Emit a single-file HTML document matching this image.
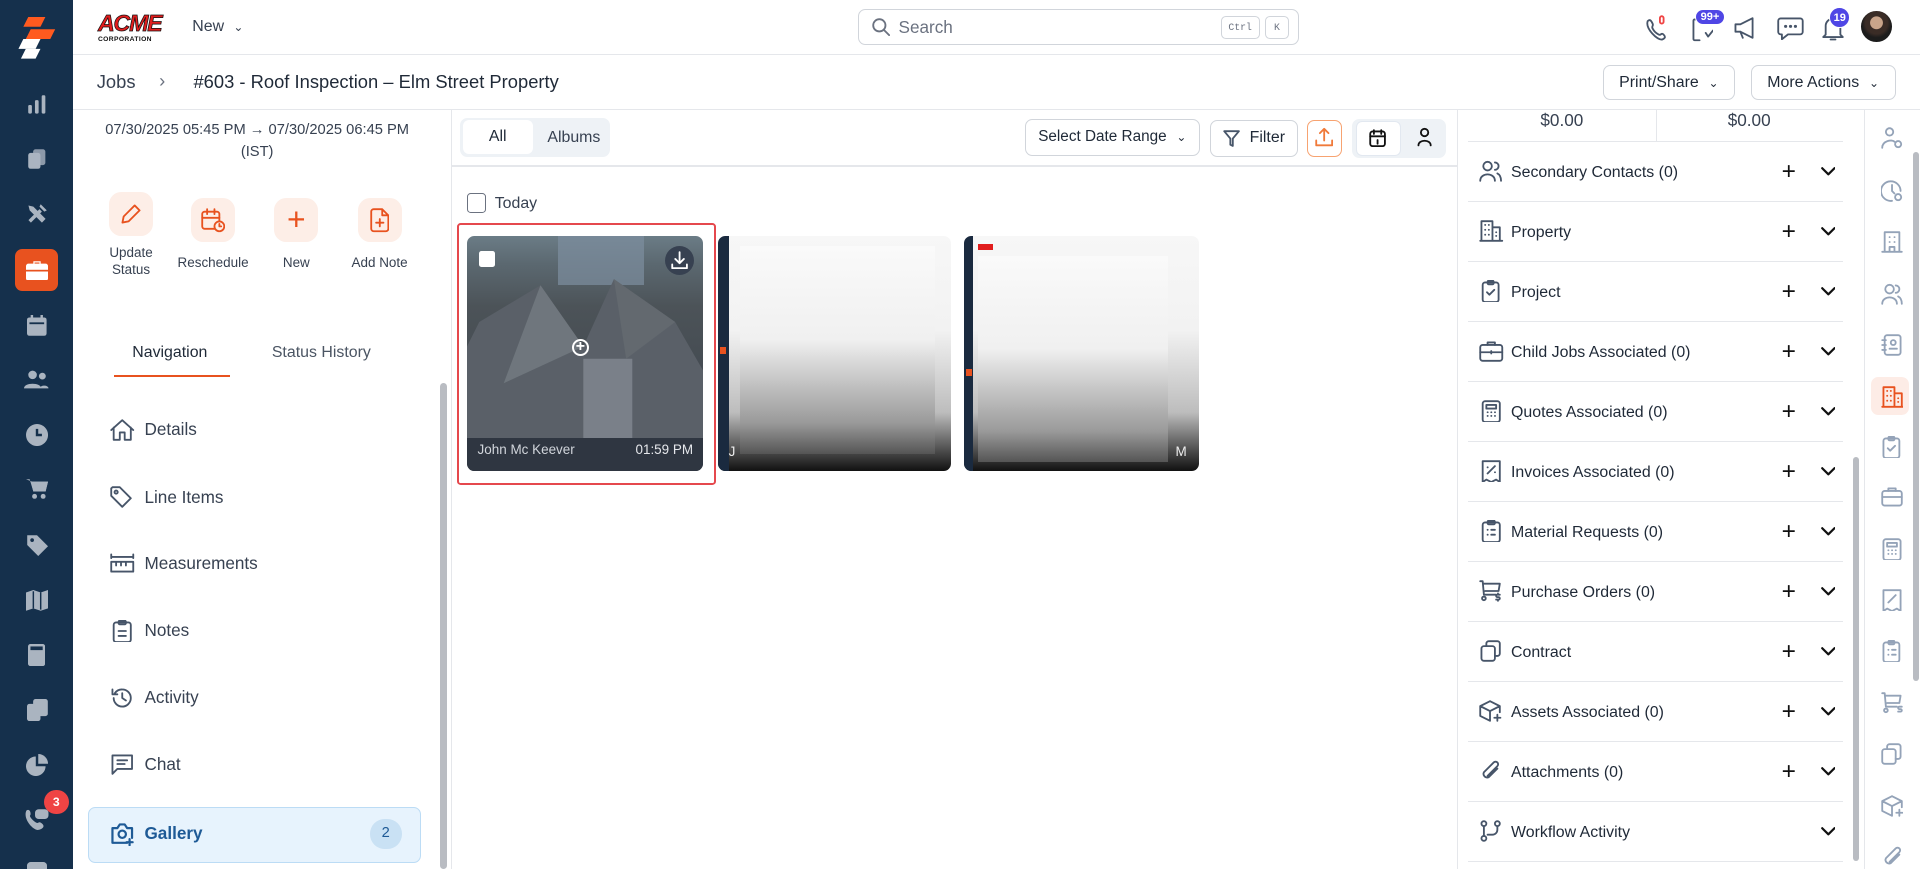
<!DOCTYPE html>
<html><head><meta charset="utf-8">
<style>
*{box-sizing:border-box;margin:0;padding:0}
html,body{width:1920px;height:869px;overflow:hidden;background:#fff}
#z{zoom:1.22449;width:1568px;height:710px;position:relative;font-family:"Liberation Sans",sans-serif;color:#1f2937;overflow:hidden}
.a{position:absolute}
svg{display:block}
.ic{stroke:#475569;fill:none;stroke-width:1.5;stroke-linecap:round;stroke-linejoin:round}
.sb svg{fill:#aab4c0}
.btn{border:1px solid #d1d5db;border-radius:6px;background:#fff;font-size:13px;color:#1f2937;display:flex;align-items:center;justify-content:center;gap:8px}
.nav{position:absolute;left:90px;display:flex;align-items:center;gap:8px;font-size:14px;color:#374151}
.row{position:absolute;left:1199px;width:306px;height:49px;border-bottom:1px solid #e5e7eb;font-size:13px;color:#1f2937}
.row .t{position:absolute;left:35px;top:18px}
.row .ri{position:absolute;left:9px;top:15px}
.row .pl{position:absolute;left:256px;top:13px;font-size:20px;font-weight:300;color:#111}
.row .ch{position:absolute;left:288px;top:20px}
.rr{position:absolute;left:1536px}
</style></head><body><div id="z">

<!-- sidebar -->
<div class="a sb" style="left:0;top:0;width:60px;height:710px;background:#15304c">
 <svg class="a" style="left:13px;top:14px" width="34" height="36" viewBox="0 0 34 36"><path d="M10 0h14l-4 8H6z" fill="#ff5a1f"/><path d="M12 10h20l-4 8H8z" fill="#ff5a1f"/><path d="M6 18h14l-4 8H2z" fill="#fff"/><path d="M8 26h12l-4 8H4z" fill="#fff"/></svg>
 <svg class="a" style="left:22px;top:77px" width="16" height="16" viewBox="0 0 16 16"><rect x="1" y="9" width="3" height="7" rx="1"/><rect x="6.5" y="5" width="3" height="11" rx="1"/><rect x="12" y="1" width="3" height="15" rx="1"/></svg>
 <svg class="a" style="left:22px;top:121px" width="16" height="18" viewBox="0 0 16 18"><rect x="1" y="4" width="10" height="13" rx="2"/><rect x="5" y="1" width="10" height="13" rx="2" opacity=".8"/></svg>
 <svg class="a" style="left:21px;top:166px" width="18" height="18" viewBox="0 0 18 18"><path d="M2 14l9-9 2 2-9 9zM12 1l5 5-2 1-4-4zM2 2l4 1 10 10-3 3L3 6z"/></svg>
 <div class="a" style="left:12px;top:203px;width:35px;height:35px;background:#e8521f;border-radius:6px"></div>
 <svg class="a" style="left:21px;top:212px" width="18" height="17" viewBox="0 0 18 17"><path d="M6 3V1h6v2h4a2 2 0 012 2v10a2 2 0 01-2 2H2a2 2 0 01-2-2V5a2 2 0 012-2zM7 3h4V2H7z" fill="#fff"/><rect x="0" y="8" width="18" height="1.4" fill="#e8521f"/></svg>
 <svg class="a" style="left:22px;top:257px" width="16" height="17" viewBox="0 0 16 17"><rect x="0" y="2" width="16" height="15" rx="2"/><rect x="3" y="0" width="2" height="4"/><rect x="11" y="0" width="2" height="4"/><rect x="2" y="6" width="12" height="1.5" fill="#15304c"/></svg>
 <svg class="a" style="left:20px;top:302px" width="20" height="16" viewBox="0 0 20 16"><circle cx="7" cy="4" r="3.5"/><circle cx="15" cy="5" r="2.8"/><path d="M0 15c0-5 14-5 14 0zM13 15c0-3 7-3 7 0z"/></svg>
 <svg class="a" style="left:21px;top:346px" width="18" height="18" viewBox="0 0 18 18"><circle cx="9" cy="9" r="9"/><path d="M9 4v5h4" stroke="#15304c" stroke-width="2" fill="none"/></svg>
 <svg class="a" style="left:21px;top:390px" width="18" height="18" viewBox="0 0 18 18"><path d="M0 1h3l3 10h10l2-8H5"/><circle cx="7" cy="15" r="2"/><circle cx="14" cy="15" r="2"/><path d="M4 3h14l-2 8H6z"/></svg>
 <svg class="a" style="left:21px;top:436px" width="18" height="18" viewBox="0 0 18 18"><path d="M1 1h8l9 9-8 8-9-9z"/><circle cx="5" cy="5" r="1.5" fill="#15304c"/></svg>
 <svg class="a" style="left:21px;top:482px" width="18" height="17" viewBox="0 0 18 17"><path d="M0 2l6-2 6 2 6-2v15l-6 2-6-2-6 2z"/><path d="M6 1v14M12 2v14" stroke="#15304c" stroke-width="1.2"/></svg>
 <svg class="a" style="left:23px;top:526px" width="14" height="18" viewBox="0 0 14 18"><rect width="14" height="18" rx="2"/><rect x="2" y="2" width="10" height="3" fill="#15304c"/></svg>
 <svg class="a" style="left:22px;top:571px" width="17" height="18" viewBox="0 0 17 18"><rect x="0" y="4" width="11" height="14" rx="2"/><rect x="5" y="0" width="12" height="14" rx="2"/></svg>
 <svg class="a" style="left:21px;top:616px" width="18" height="18" viewBox="0 0 18 18"><path d="M8 2a8 8 0 108 8H8z"/><path d="M10 0a8 8 0 018 8h-8z"/></svg>
 <svg class="a" style="left:20px;top:660px" width="20" height="19" viewBox="0 0 20 19"><path d="M2 2c3-2 4 3 3 4s3 5 5 6 2-2 5 1-2 5-4 5C6 17-1 8 2 2z"/><rect x="9" y="1" width="11" height="8" rx="3"/></svg>
 <div class="a" style="left:36px;top:645px;width:20px;height:20px;border-radius:50%;background:#ef4444;color:#fff;font-size:10px;font-weight:bold;text-align:center;line-height:20px">3</div>
 <div class="a" style="left:22px;top:704px;width:16px;height:6px;background:#aab4c0;border-radius:3px 3px 0 0"></div>
</div>

<!-- header -->
<div class="a" style="left:60px;top:44px;width:1508px;height:1px;background:#e5e7eb"></div>
<div class="a" style="left:80px;top:8px;font-family:'Liberation Sans';font-weight:900;font-size:19px;color:#e11d1d;letter-spacing:-1px;font-style:italic;-webkit-text-stroke:0.6px #111">ACME</div>
<div class="a" style="left:80px;top:29px;font-size:5.5px;font-weight:bold;letter-spacing:.3px;color:#111">CORPORATION</div>
<div class="a" style="left:157px;top:15px;font-size:13px;color:#374151">New <span style="font-size:10px;margin-left:4px">&#8964;</span></div>
<div class="a" style="left:701px;top:7px;width:360px;height:30px;border:1px solid #d1d5db;border-radius:6px">
 <svg class="a ic" style="left:10px;top:7px;stroke:#6b7280" width="15" height="15" viewBox="0 0 15 15"><circle cx="6" cy="6" r="5"/><path d="M10 10l4 4"/></svg>
 <div class="a" style="left:32px;top:6px;font-size:14px;color:#6b7280">Search</div>
 <div class="a" style="left:295px;top:5px;width:32px;height:19px;border:1px solid #d1d5db;border-radius:4px;font-family:'Liberation Mono';font-size:8px;color:#6b7280;text-align:center;line-height:18px">Ctrl</div>
 <div class="a" style="left:331px;top:5px;width:20px;height:19px;border:1px solid #d1d5db;border-radius:4px;font-family:'Liberation Mono';font-size:8px;color:#6b7280;text-align:center;line-height:18px">K</div>
</div>
<svg class="a ic" style="left:1343px;top:12px;stroke:#475569" width="20" height="22" viewBox="0 0 20 22"><path d="M3 5c2-2 3 0 4 2s-1 2 0 4 3 4 5 5 2-2 4 0 1 3-1 4C11 21 1 11 3 5z"/><rect x="13" y="1" width="3" height="6" rx="1.5" stroke="#ef4444"/></svg>
<svg class="a ic" style="left:1381px;top:14px" width="18" height="22" viewBox="0 0 18 22"><path d="M7 2H3a1 1 0 00-1 1v15a1 1 0 001 1h4M12 13l2 3 4-5"/></svg>
<div class="a" style="left:1384px;top:7px;background:#4f46e5;color:#fff;font-size:9px;font-weight:bold;border-radius:8px;padding:1px 4px;border:1px solid #fff">99+</div>
<svg class="a ic" style="left:1415px;top:14px" width="22" height="18" viewBox="0 0 22 18"><path d="M2 6h4l10-5v16L6 12H2zM6 12l2 5"/></svg>
<svg class="a ic" style="left:1451px;top:13px" width="22" height="20" viewBox="0 0 22 20"><path d="M3 2h16a2 2 0 012 2v9a2 2 0 01-2 2H9l-5 4v-4H3a2 2 0 01-2-2V4a2 2 0 012-2z"/><path d="M7 8.5h.1M11 8.5h.1M15 8.5h.1" stroke-width="2.5"/></svg>
<svg class="a ic" style="left:1488px;top:12px" width="18" height="22" viewBox="0 0 18 22"><path d="M3 16V9a6 6 0 0112 0v7l2 2H1zM7 20h4"/></svg>
<div class="a" style="left:1494px;top:6px;width:17px;height:17px;border-radius:50%;background:#4f46e5;color:#fff;font-size:9px;font-weight:bold;text-align:center;line-height:17px;border:1px solid #fff">19</div>
<div class="a" style="left:1520px;top:9px;width:25px;height:25px;border-radius:50%;background:radial-gradient(circle at 50% 38%,#c9a48a 0 25%,#3a2c26 27% 45%,#1c1c1c 60%)"></div>

<!-- breadcrumb bar -->
<div class="a" style="left:79px;top:58px;font-size:15px;color:#374151">Jobs</div>
<div class="a" style="left:130px;top:57px;font-size:15px;color:#6b7280">&#8250;</div>
<div class="a" style="left:158px;top:58px;font-size:15px;color:#1f2937">#603 - Roof Inspection – Elm Street Property</div>
<div class="a btn" style="left:1309px;top:53px;width:108px;height:29px">Print/Share <span style="font-size:10px">&#8964;</span></div>
<div class="a btn" style="left:1430px;top:53px;width:118px;height:29px">More Actions <span style="font-size:10px">&#8964;</span></div>
<div class="a" style="left:60px;top:89px;width:1508px;height:1px;background:#e5e7eb"></div>

<!-- left panel -->
<div class="a" style="left:80px;top:97px;width:260px;text-align:center;font-size:12px;line-height:18px;color:#374151">07/30/2025 05:45 PM → 07/30/2025 06:45 PM (IST)</div>
<div class="a" style="left:89px;top:157px;width:36px;height:36px;border-radius:10px;background:#fdeee7"></div>
<svg class="a ic" style="left:98px;top:166px;stroke:#e8521f" width="18" height="18" viewBox="0 0 18 18"><path d="M12 2l4 4-9 9-5 1 1-5z"/></svg>
<div class="a" style="left:72px;top:199px;width:70px;text-align:center;font-size:11px;line-height:14px;color:#374151">Update<br>Status</div>
<div class="a" style="left:156px;top:162px;width:36px;height:36px;border-radius:10px;background:#fdeee7"></div>
<svg class="a ic" style="left:164px;top:170px;stroke:#e8521f" width="20" height="20" viewBox="0 0 20 20"><rect x="1" y="3" width="14" height="14" rx="2"/><path d="M5 1v4M11 1v4M1 8h14"/><circle cx="15" cy="15" r="4" fill="#fdeee7"/><path d="M15 13v2h1.5"/></svg>
<div class="a" style="left:139px;top:208px;width:70px;text-align:center;font-size:11px;color:#374151">Reschedule</div>
<div class="a" style="left:224px;top:162px;width:36px;height:36px;border-radius:10px;background:#fdeee7"></div>
<div class="a" style="left:224px;top:164px;width:36px;text-align:center;font-size:26px;font-weight:300;color:#e8521f;line-height:30px">+</div>
<div class="a" style="left:207px;top:208px;width:70px;text-align:center;font-size:11px;color:#374151">New</div>
<div class="a" style="left:292px;top:162px;width:36px;height:36px;border-radius:10px;background:#fdeee7"></div>
<svg class="a ic" style="left:302px;top:170px;stroke:#e8521f" width="16" height="20" viewBox="0 0 16 20"><path d="M10 1H3a2 2 0 00-2 2v14a2 2 0 002 2h10a2 2 0 002-2V6z M10 1v5h5M8 9v6M5 12h6"/></svg>
<div class="a" style="left:275px;top:208px;width:70px;text-align:center;font-size:11px;color:#374151">Add Note</div>
<div class="a" style="left:108px;top:281px;font-size:13px;color:#1f2937">Navigation</div>
<div class="a" style="left:222px;top:281px;font-size:13px;color:#4b5563">Status History</div>
<div class="a" style="left:93px;top:306px;width:95px;height:2px;background:#e8521f"></div>

<div class="nav" style="top:342px"><svg class="ic" width="20" height="18" viewBox="0 0 20 18"><path d="M1 9l9-8 9 8M3 7v10h5v-6h4v6h5V7"/></svg><span>Details</span></div>
<div class="nav" style="top:397px"><svg class="ic" width="20" height="18" viewBox="0 0 20 18"><path d="M1 2v6l9 9 7-7-9-9H2z"/><circle cx="5" cy="5" r="1.3"/></svg><span>Line Items</span></div>
<div class="nav" style="top:451px"><svg class="ic" width="20" height="18" viewBox="0 0 20 18"><path d="M1 2v3M19 2v3M1 4h18M1 8h18v8H1zM5 8v3M9 8v3M13 8v3"/></svg><span>Measurements</span></div>
<div class="nav" style="top:506px"><svg class="ic" width="20" height="18" viewBox="0 0 20 18"><rect x="3" y="2" width="14" height="16" rx="2"/><rect x="7" y="0.5" width="6" height="3" rx="1"/><path d="M7 9h6M7 13h6"/></svg><span>Notes</span></div>
<div class="nav" style="top:561px"><svg class="ic" width="20" height="18" viewBox="0 0 20 18"><path d="M3 9a7 7 0 107-7 7 7 0 00-6 3M2 2v4h4M10 5v4l3 2"/></svg><span>Activity</span></div>
<div class="nav" style="top:615px"><svg class="ic" width="20" height="18" viewBox="0 0 20 18"><path d="M2 2h16v11H6l-4 4zM6 6h8M6 9h6"/></svg><span>Chat</span></div>
<div class="a" style="left:72px;top:659px;width:272px;height:46px;background:#e7f3fd;border:1px solid #bcdcf5;border-radius:6px"></div>
<div class="nav" style="top:671px;color:#1e5a96;font-weight:bold"><svg class="ic" style="stroke:#1e5a96;stroke-width:1.8" width="20" height="20" viewBox="0 0 20 20"><path d="M2 5h4l2-3h4l2 3h4v8M14 17H2z M2 5v12"/><circle cx="10" cy="10" r="3"/><path d="M16 14v5M13.5 16.5h5"/></svg><span>Gallery</span></div>
<div class="a" style="left:302px;top:669px;width:26px;height:24px;border-radius:12px;background:#c9e1f4;color:#1e5a96;font-size:12px;text-align:center;line-height:24px">2</div>
<div class="a" style="left:358px;top:90px;width:10px;height:620px;background:#fff"></div>
<div class="a" style="left:359px;top:313px;width:6px;height:397px;background:#b9bcc2;border-radius:3px"></div>
<div class="a" style="left:368px;top:90px;width:1px;height:620px;background:#e5e7eb"></div>

<!-- middle toolbar -->
<div class="a" style="left:376px;top:96px;width:122px;height:32px;background:#eef2f6;border-radius:6px"></div>
<div class="a" style="left:378px;top:98px;width:57px;height:28px;background:#fff;border-radius:5px;font-size:13px;text-align:center;line-height:28px">All</div>
<div class="a" style="left:447px;top:105px;font-size:13px;color:#374151">Albums</div>
<div class="a btn" style="left:837px;top:97px;width:143px;height:30px;font-size:12.5px">Select Date Range <span style="font-size:10px">&#8964;</span></div>
<div class="a btn" style="left:988px;top:98px;width:72px;height:30px"><svg class="ic" width="14" height="14" viewBox="0 0 14 14"><path d="M1 1h12L8 7v6l-2-1V7z"/></svg>Filter</div>
<div class="a" style="left:1067px;top:98px;width:29px;height:30px;border:1px solid #f7a371;border-radius:6px"></div>
<svg class="a ic" style="left:1074px;top:104px;stroke:#f07a3a" width="15" height="16" viewBox="0 0 15 16"><path d="M7.5 11V2M4 5l3.5-3.5L11 5M1 11v4h13v-4"/></svg>
<div class="a" style="left:1104px;top:97px;width:77px;height:32px;background:#eef2f6;border-radius:6px"></div>
<div class="a" style="left:1107px;top:99px;width:37px;height:28px;background:#fff;border-radius:5px;border:1px solid #e2e8f0"></div>
<svg class="a ic" style="left:1118px;top:105px;stroke:#111" width="14" height="15" viewBox="0 0 14 15"><rect x="1" y="2" width="12" height="12" rx="2"/><path d="M4 1v3M10 1v3M1 6h12M7 9v3"/></svg>
<svg class="a ic" style="left:1156px;top:104px;stroke:#111" width="14" height="16" viewBox="0 0 14 16"><circle cx="7" cy="4.5" r="3"/><path d="M2 15c0-5 10-5 10 0"/></svg>
<div class="a" style="left:369px;top:135px;width:821px;height:1px;background:#e5e7eb"></div>

<div class="a" style="left:381px;top:158px;width:16px;height:16px;border:1.5px solid #6b7280;border-radius:3px"></div>
<div class="a" style="left:404px;top:159px;font-size:13px;color:#374151">Today</div>

<!-- cards -->
<div class="a" style="left:373px;top:182px;width:212px;height:214px;border:2px solid #e5484d;border-radius:3px"></div>
<div class="a" style="left:381px;top:193px;width:193px;height:192px;border-radius:6px;overflow:hidden;background:linear-gradient(180deg,#6b7c86 0%,#5b6870 12%,#4c5358 30%,#444b52 60%,#343b43 85%,#2f3641 100%)">
 <div class="a" style="left:75px;top:0;width:70px;height:40px;background:#7d8fa0;opacity:.7"></div>
 <svg class="a" style="left:0;top:30px" width="193" height="150" viewBox="0 0 193 150"><path d="M10 40L60 10 95 60 120 5 170 40 193 80 193 150 0 150 0 60z" fill="#5a6068"/><path d="M60 10 30 90 95 60z" fill="#6f767d"/><path d="M95 70h40v70H95z" fill="#7a8089"/><path d="M120 5 130 70 170 40z" fill="#63696f"/></svg>
 <div class="a" style="left:0;top:165px;width:193px;height:27px;background:#2f3641"></div>
 <div class="a" style="left:9px;top:168px;font-size:11px;color:#d1d5db">John Mc Keever</div>
 <div class="a" style="left:138px;top:168px;font-size:11px;color:#e5e7eb">01:59 PM</div>
 <div class="a" style="left:10px;top:12px;width:13px;height:13px;background:#fff;border-radius:2px"></div>
 <div class="a" style="left:162px;top:8px;width:24px;height:24px;border-radius:50%;background:#374151"></div>
 <svg class="a ic" style="left:167px;top:12px;stroke:#fff" width="14" height="15" viewBox="0 0 14 15"><path d="M7 1v9M3.5 6.5L7 10l3.5-3.5M1 11v3h12v-3"/></svg>
 <div class="a" style="left:86px;top:84px;width:14px;height:14px;border:2px solid #fff;border-radius:50%;color:#fff;font-size:13px;font-weight:bold;text-align:center;line-height:10px">+</div>
</div>
<div class="a" style="left:586px;top:193px;width:191px;height:192px;border-radius:6px;overflow:hidden;background:linear-gradient(180deg,#f7f7f7 0%,#f2f2f2 40%,#bdbdbd 75%,#111 100%)">
 <div class="a" style="left:0;top:0;width:9px;height:192px;background:#1a2a3f"></div>
 <div class="a" style="left:2px;top:90px;width:5px;height:6px;background:#e8521f"></div>
 <div class="a" style="left:18px;top:8px;width:160px;height:170px;background:linear-gradient(180deg,#fafafa,#f0f0f0 45%,#9a9a9a 85%,#555)"></div>
 <div class="a" style="left:9px;top:170px;font-size:11px;color:#eee">J</div>
</div>
<div class="a" style="left:787px;top:193px;width:192px;height:192px;border-radius:6px;overflow:hidden;background:linear-gradient(180deg,#f7f7f7 0%,#f2f2f2 40%,#bdbdbd 75%,#111 100%)">
 <div class="a" style="left:0;top:0;width:8px;height:192px;background:#1a2a3f"></div>
 <div class="a" style="left:2px;top:108px;width:5px;height:6px;background:#e8521f"></div>
 <div class="a" style="left:12px;top:6px;width:12px;height:5px;background:#e11d1d"></div>
 <div class="a" style="left:12px;top:16px;width:155px;height:168px;background:linear-gradient(180deg,#fafafa,#f0f0f0 45%,#9a9a9a 85%,#555)"></div>
 <div class="a" style="left:173px;top:170px;font-size:11px;color:#eee">M</div>
</div>

<!-- right panel -->
<div class="a" style="left:1190px;top:90px;width:1px;height:620px;background:#e5e7eb"></div>
<div class="a" style="left:1199px;top:90px;width:153px;text-align:center;font-size:14px;color:#374151;top:90px">$0.00</div>
<div class="a" style="left:1352px;top:90px;width:153px;text-align:center;font-size:14px;color:#374151">$0.00</div>
<div class="a" style="left:1352px;top:90px;width:1px;height:26px;background:#e5e7eb"></div>
<div class="a" style="left:1199px;top:115px;width:306px;height:1px;background:#e5e7eb"></div>

<div class="row" style="top:116px"><svg class="ri ic" width="20" height="18" viewBox="0 0 20 18"><circle cx="7" cy="5" r="3.5"/><path d="M1 17c0-7 12-7 12 0M13 2a3 3 0 010 6M15 11c2 1 3 3 3 6"/></svg><span class="t">Secondary Contacts (0)</span><span class="pl">+</span><svg class="ch ic" style="stroke:#111;stroke-width:1.8" width="12" height="8" viewBox="0 0 12 8"><path d="M1 1l5 5 5-5"/></svg></div>
<div class="row" style="top:165px"><svg class="ri ic" width="20" height="18" viewBox="0 0 20 18"><path d="M2 17V1h9v16M11 6h6v11M1 17h18M5 4h.1M8 4h.1M5 8h.1M8 8h.1M5 12h.1M8 12h.1M14 10h.1M14 13h.1"/></svg><span class="t">Property</span><span class="pl">+</span><svg class="ch ic" style="stroke:#111;stroke-width:1.8" width="12" height="8" viewBox="0 0 12 8"><path d="M1 1l5 5 5-5"/></svg></div>
<div class="row" style="top:214px"><svg class="ri ic" width="20" height="18" viewBox="0 0 20 18"><rect x="3" y="2" width="13" height="16" rx="2"/><rect x="7" y="0.5" width="5" height="3" rx="1"/><path d="M6.5 10l2 2 4-4"/></svg><span class="t">Project</span><span class="pl">+</span><svg class="ch ic" style="stroke:#111;stroke-width:1.8" width="12" height="8" viewBox="0 0 12 8"><path d="M1 1l5 5 5-5"/></svg></div>
<div class="row" style="top:263px"><svg class="ri ic" width="20" height="18" viewBox="0 0 20 18"><rect x="1" y="4" width="18" height="13" rx="2"/><path d="M7 4V2h6v2M1 10h18M10 9v2"/></svg><span class="t">Child Jobs Associated (0)</span><span class="pl">+</span><svg class="ch ic" style="stroke:#111;stroke-width:1.8" width="12" height="8" viewBox="0 0 12 8"><path d="M1 1l5 5 5-5"/></svg></div>
<div class="row" style="top:312px"><svg class="ri ic" width="20" height="18" viewBox="0 0 20 18"><rect x="3" y="1" width="14" height="17" rx="2"/><path d="M6 4h8v3H6zM7 10h.1M10 10h.1M13 10h.1M7 13h.1M10 13h.1M13 13h.1"/></svg><span class="t">Quotes Associated (0)</span><span class="pl">+</span><svg class="ch ic" style="stroke:#111;stroke-width:1.8" width="12" height="8" viewBox="0 0 12 8"><path d="M1 1l5 5 5-5"/></svg></div>
<div class="row" style="top:361px"><svg class="ri ic" width="20" height="18" viewBox="0 0 20 18"><path d="M3 1h14v17l-3-2-4 2-4-2-3 2zM7 11l6-6M7 6h.1M13 10h.1"/></svg><span class="t">Invoices Associated (0)</span><span class="pl">+</span><svg class="ch ic" style="stroke:#111;stroke-width:1.8" width="12" height="8" viewBox="0 0 12 8"><path d="M1 1l5 5 5-5"/></svg></div>
<div class="row" style="top:410px"><svg class="ri ic" width="20" height="18" viewBox="0 0 20 18"><rect x="3" y="2" width="14" height="16" rx="2"/><rect x="7" y="0.5" width="6" height="3" rx="1"/><path d="M7 8h.1M10 8h3M7 12h.1M10 12h3"/></svg><span class="t">Material Requests (0)</span><span class="pl">+</span><svg class="ch ic" style="stroke:#111;stroke-width:1.8" width="12" height="8" viewBox="0 0 12 8"><path d="M1 1l5 5 5-5"/></svg></div>
<div class="row" style="top:459px"><svg class="ri ic" width="20" height="18" viewBox="0 0 20 18"><path d="M1 1h2l1 11h10M4 3h13l-1 6H5"/><circle cx="4" cy="15" r="1.5"/><path d="M17 12h-2a1 1 0 000 2h1a1 1 0 010 2h-2M15.5 11v1M15.5 16v1"/></svg><span class="t">Purchase Orders (0)</span><span class="pl">+</span><svg class="ch ic" style="stroke:#111;stroke-width:1.8" width="12" height="8" viewBox="0 0 12 8"><path d="M1 1l5 5 5-5"/></svg></div>
<div class="row" style="top:508px"><svg class="ri ic" width="20" height="18" viewBox="0 0 20 18"><rect x="2" y="5" width="11" height="12" rx="2"/><path d="M6 5V3a2 2 0 012-2h7a2 2 0 012 2v8a2 2 0 01-2 2h-2"/></svg><span class="t">Contract</span><span class="pl">+</span><svg class="ch ic" style="stroke:#111;stroke-width:1.8" width="12" height="8" viewBox="0 0 12 8"><path d="M1 1l5 5 5-5"/></svg></div>
<div class="row" style="top:557px"><svg class="ri ic" width="20" height="18" viewBox="0 0 20 18"><path d="M9 1l8 4v5M9 1L1 5v8l8 4M1 5l8 4 8-4M9 9v8M15 12v5M12.5 14.5h5"/></svg><span class="t">Assets Associated (0)</span><span class="pl">+</span><svg class="ch ic" style="stroke:#111;stroke-width:1.8" width="12" height="8" viewBox="0 0 12 8"><path d="M1 1l5 5 5-5"/></svg></div>
<div class="row" style="top:606px"><svg class="ri ic" width="20" height="18" viewBox="0 0 20 18"><path d="M15 7l-7 7a3 3 0 01-4-4l8-8a2 2 0 013 3l-8 8"/></svg><span class="t">Attachments (0)</span><span class="pl">+</span><svg class="ch ic" style="stroke:#111;stroke-width:1.8" width="12" height="8" viewBox="0 0 12 8"><path d="M1 1l5 5 5-5"/></svg></div>
<div class="row" style="top:655px"><svg class="ri ic" width="20" height="18" viewBox="0 0 20 18"><circle cx="4" cy="3" r="2"/><circle cx="4" cy="15" r="2"/><circle cx="15" cy="3" r="2"/><path d="M4 5v8M15 5v3a4 4 0 01-4 4H7"/></svg><span class="t">Workflow Activity</span><svg class="ch ic" style="stroke:#111;stroke-width:1.8" width="12" height="8" viewBox="0 0 12 8"><path d="M1 1l5 5 5-5"/></svg></div>
<div class="a" style="left:1513px;top:373px;width:5px;height:330px;background:#b9bcc2;border-radius:3px"></div>
<div class="a" style="left:1522px;top:90px;width:1px;height:620px;background:#e5e7eb"></div>
<div class="a" style="left:1562px;top:124px;width:5px;height:432px;background:#b9bcc2;border-radius:3px"></div>

<!-- right rail -->
<svg class="rr ic" style="top:104px;stroke:#94a3b8" width="18" height="18" viewBox="0 0 18 18"><circle cx="7" cy="4" r="3"/><path d="M1 17c0-6 8-7 10-5"/><circle cx="14" cy="14" r="2.5"/></svg>
<svg class="rr ic" style="top:147px;stroke:#94a3b8" width="18" height="18" viewBox="0 0 18 18"><path d="M16 9a8 8 0 10-7 8M9 4v5l2 2"/><circle cx="14" cy="14" r="2.5"/></svg>
<svg class="rr ic" style="top:189px;stroke:#94a3b8" width="18" height="18" viewBox="0 0 18 18"><path d="M3 17V1h12v16M1 17h16M7 5h.1M11 5h.1M7 9h.1M11 9h.1M7 17v-4h4v4"/></svg>
<svg class="rr ic" style="top:231px;stroke:#94a3b8" width="18" height="18" viewBox="0 0 18 18"><circle cx="7" cy="5" r="3.5"/><path d="M1 17c0-7 12-7 12 0M12 2a3 3 0 010 6M14 11c2 1 3 3 3 6"/></svg>
<svg class="rr ic" style="top:273px;stroke:#94a3b8" width="18" height="18" viewBox="0 0 18 18"><rect x="3" y="1" width="13" height="16" rx="2"/><circle cx="10" cy="7" r="2"/><path d="M7 12h6M1 5h3M1 9h3M1 13h3"/></svg>
<div class="a" style="left:1528px;top:308px;width:31px;height:31px;background:#fdece6;border-radius:6px"></div>
<svg class="rr ic" style="top:315px;stroke:#e8521f" width="18" height="18" viewBox="0 0 18 18"><path d="M2 17V1h9v16M11 6h6v11M1 17h17M5 4h.1M8 4h.1M5 8h.1M8 8h.1M5 12h.1M8 12h.1M14 10h.1M14 13h.1"/></svg>
<svg class="rr ic" style="top:356px;stroke:#94a3b8" width="18" height="18" viewBox="0 0 18 18"><rect x="2" y="2" width="13" height="16" rx="2"/><rect x="6" y="0.5" width="5" height="3" rx="1"/><path d="M5.5 10l2 2 4-4"/></svg>
<svg class="rr ic" style="top:397px;stroke:#94a3b8" width="18" height="18" viewBox="0 0 18 18"><rect x="1" y="4" width="16" height="12" rx="2"/><path d="M6 4V2h6v2M1 9h16"/></svg>
<svg class="rr ic" style="top:439px;stroke:#94a3b8" width="18" height="18" viewBox="0 0 18 18"><rect x="2" y="1" width="14" height="17" rx="2"/><path d="M5 4h8v3H5zM6 10h.1M9 10h.1M12 10h.1M6 13h.1M9 13h.1M12 13h.1"/></svg>
<svg class="rr ic" style="top:481px;stroke:#94a3b8" width="18" height="18" viewBox="0 0 18 18"><path d="M2 1h14v17l-3-2-4 2-4-2-3 2zM6 11l6-6"/></svg>
<svg class="rr ic" style="top:523px;stroke:#94a3b8" width="18" height="18" viewBox="0 0 18 18"><rect x="2" y="2" width="13" height="16" rx="2"/><rect x="6" y="0.5" width="5" height="3" rx="1"/><path d="M6 8h.1M9 8h3M6 12h.1M9 12h3"/></svg>
<svg class="rr ic" style="top:565px;stroke:#94a3b8" width="18" height="18" viewBox="0 0 18 18"><path d="M1 1h2l1 11h9M4 3h12l-1 6H5"/><circle cx="4" cy="15" r="1.5"/><path d="M17 12h-2a1 1 0 000 2h1a1 1 0 010 2h-2"/></svg>
<svg class="rr ic" style="top:607px;stroke:#94a3b8" width="18" height="18" viewBox="0 0 18 18"><rect x="1" y="5" width="11" height="12" rx="2"/><path d="M5 5V3a2 2 0 012-2h7a2 2 0 012 2v8a2 2 0 01-2 2h-2"/></svg>
<svg class="rr ic" style="top:649px;stroke:#94a3b8" width="18" height="18" viewBox="0 0 18 18"><path d="M9 1l8 4v5M9 1L1 5v8l8 4M1 5l8 4 8-4M9 9v8M15 12v5M12.5 14.5h5"/></svg>
<svg class="rr ic" style="top:691px;stroke:#94a3b8" width="18" height="18" viewBox="0 0 18 18"><path d="M15 7l-7 7a3 3 0 01-4-4l8-8a2 2 0 013 3l-8 8"/></svg>

</div></body></html>
